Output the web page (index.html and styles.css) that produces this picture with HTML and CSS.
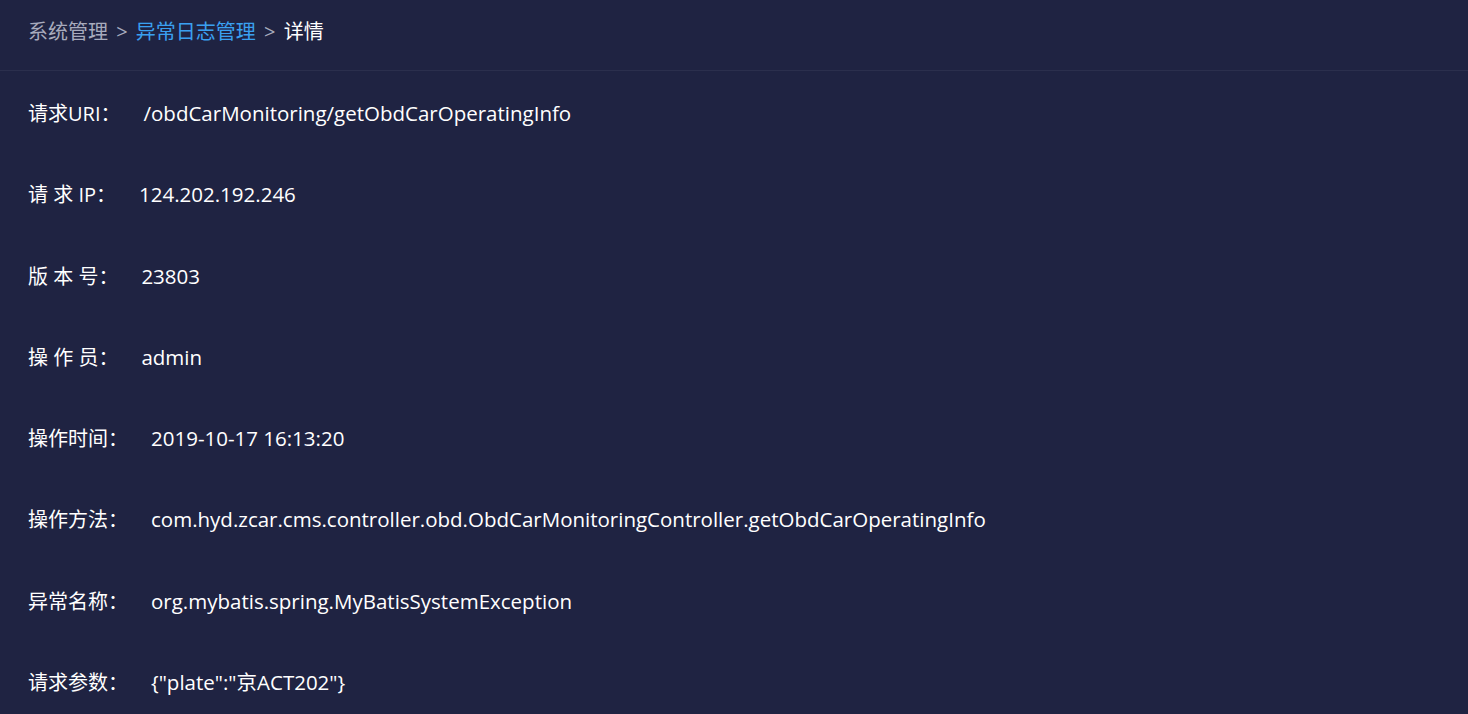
FILE: index.html
```html
<!DOCTYPE html>
<html lang="zh-CN">
<head>
    <meta charset="UTF-8">
    <title>异常日志详情</title>
    <link rel="stylesheet" href="styles.css">
</head>
<body>

    <div class="crumbs">
        <span class="crumb-gray">系统管理</span>
        <span class="sep">&gt;</span>
        <span class="crumb-blue">异常日志管理</span>
        <span class="sep">&gt;</span>
        <span class="crumb-now">详情</span>
    </div>

    <div class="detail">
        <div class="row"><span class="label">请求URI：</span><span class="value">/obdCarMonitoring/getObdCarOperatingInfo</span></div>
        <div class="row"><span class="label">请 求 IP：</span><span class="value">124.202.192.246</span></div>
        <div class="row"><span class="label">版 本 号：</span><span class="value">23803</span></div>
        <div class="row"><span class="label">操 作 员：</span><span class="value">admin</span></div>
        <div class="row"><span class="label">操作时间：</span><span class="value">2019-10-17 16:13:20</span></div>
        <div class="row"><span class="label">操作方法：</span><span class="value">com.hyd.zcar.cms.controller.obd.ObdCarMonitoringController.getObdCarOperatingInfo</span></div>
        <div class="row"><span class="label">异常名称：</span><span class="value">org.mybatis.spring.MyBatisSystemException</span></div>
        <div class="row"><span class="label">请求参数：</span><span class="value">{"plate":"京ACT202"}</span></div>
    </div>

</body>
</html>
```

FILE: styles.css
```css
body {
    margin: 0;
    padding: 0;
    background-color: #1f2342;
    color: #ffffff;
    font-family: "Open Sans", "Noto Sans CJK SC", sans-serif;
    font-size: 20px;
    overflow: hidden;
}

.crumbs {
    height: 71px;
    line-height: 64px;
    padding-left: 28px;
    border-bottom: 1px solid #2b2f4d;
    box-sizing: border-box;
}

.crumb-gray {
    color: #a8abbd;
}

.crumb-blue {
    color: #3aa0f0;
}

.crumb-now {
    color: #ffffff;
}

.sep {
    color: #a8abbd;
    margin: 0 3px;
}

.detail {
    padding-left: 28px;
    padding-top: 28px;
}

.row {
    height: 81.3px;
    line-height: 28px;
}

.row:last-child {
    height: auto;
}

.label {
    display: inline-block;
    margin-right: 23px;
}

.value {
    font-size: 20.5px;
}
```
